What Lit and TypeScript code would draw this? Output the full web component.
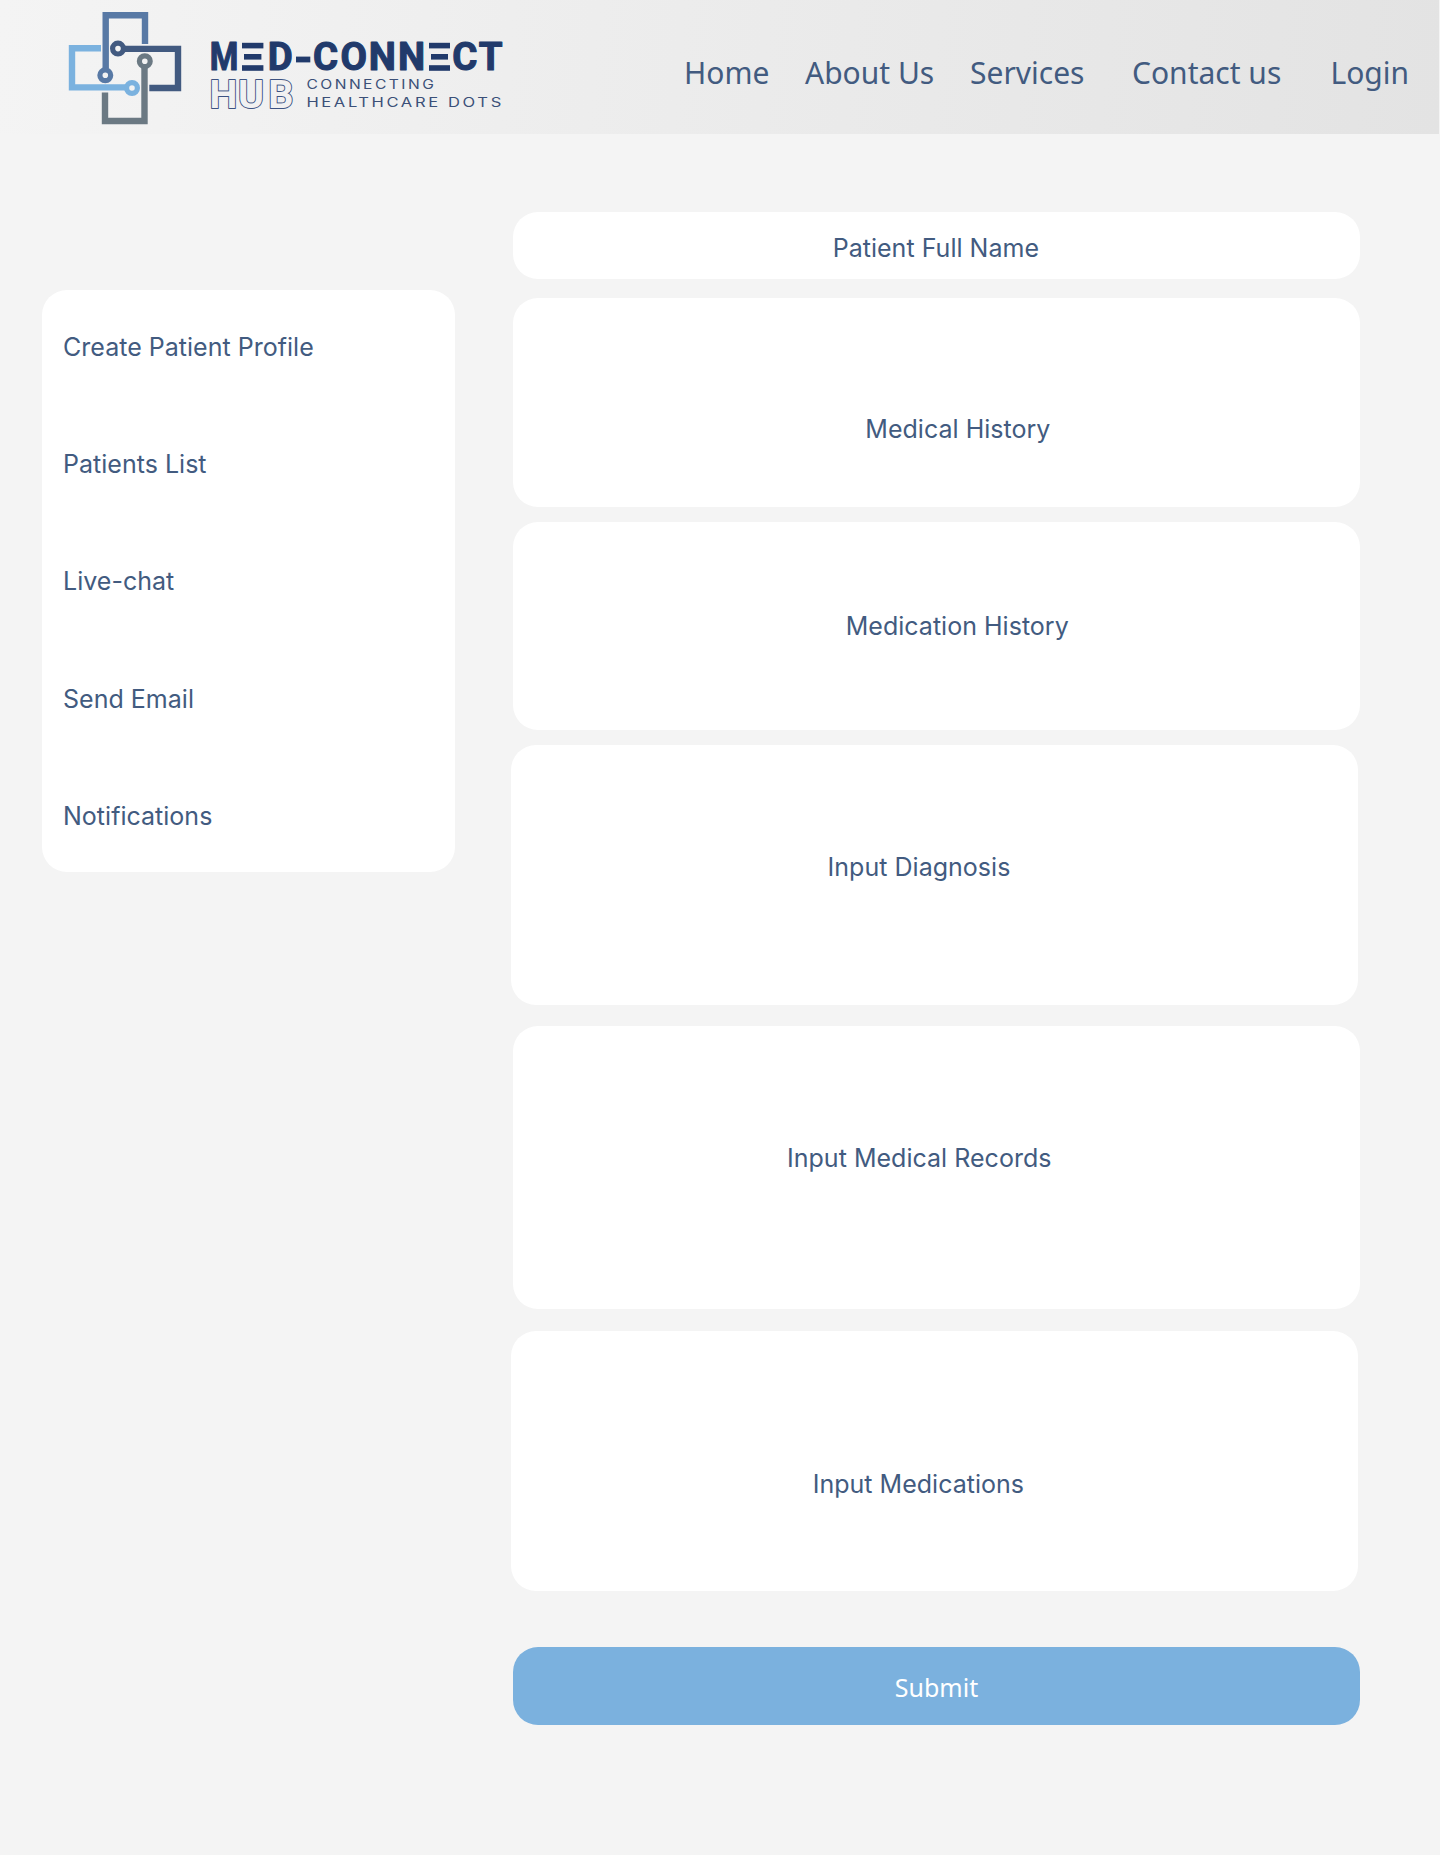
import { LitElement, html, css } from "lit";
import { customElement } from "lit/decorators.js";

@customElement("brand-logo")
class BrandLogo extends LitElement {
  static styles = css`
    :host { display: block; width: 460px; height: 134px; }
    .art { display: block; }
    .word { font: 700 38.4px Roboto, sans-serif; fill: #213a6b; stroke: #213a6b; stroke-width: 1.1; stroke-linejoin: round; }
    .ghost { fill: none; stroke: none; }
    .outline { font: 700 39.5px Roboto, sans-serif; fill: #f1f1f1; stroke: #3d5382; stroke-width: 1.9; paint-order: stroke; stroke-linejoin: round; }
    .tag { font: 400 12.6px Inter, sans-serif; fill: #3b5078; letter-spacing: 2px; }
  `;

  render() {
    return html`
      <svg class="art" width="520" height="134" viewBox="0 0 520 134" role="img" aria-label="Med-Connect Hub">
        <g fill="none" stroke-width="6.4">
          <path d="M145 44V15.3H105.7V68" stroke="#5879a5" />
          <circle cx="105.3" cy="75.3" r="5.4" stroke="#5879a5" stroke-width="5.2" />
          <path d="M101 48.3H72V87.4H125" stroke="#7bb2df" />
          <circle cx="132" cy="88" r="5.4" stroke="#7bb2df" stroke-width="5.2" />
          <path d="M125 48.9H178V88H149.3" stroke="#425a80" />
          <circle cx="118" cy="48.6" r="5.4" stroke="#425a80" stroke-width="5.2" />
          <path d="M105 92.5V121H144.5V68" stroke="#6b7983" />
          <circle cx="144.8" cy="61.2" r="5.4" stroke="#6b7983" stroke-width="5.2" />
        </g>
        <text class="word" y="70.2"><tspan x="209.8" textLength="28.6" lengthAdjust="spacingAndGlyphs">M</tspan><tspan class="ghost" x="240">E</tspan><tspan x="267.8">D</tspan><tspan class="ghost" x="296">-</tspan><tspan x="313 340.6 368.8 398">CONN</tspan><tspan class="ghost" x="428">E</tspan><tspan x="452.3 478.8">CT</tspan></text>
        <g fill="#213a6b">
          <rect x="242" y="42.8" width="21.4" height="5.6" />
          <rect x="244" y="54" width="17.4" height="5.6" />
          <rect x="242" y="65.2" width="21.4" height="5.6" />
          <rect x="296" y="56.6" width="14.3" height="5.8" />
          <rect x="429" y="42.8" width="21" height="5.6" />
          <rect x="431" y="54" width="17" height="5.6" />
          <rect x="429" y="65.2" width="21" height="5.6" />
        </g>
        <text class="outline" x="209.5 238 268.2" y="107.5">HUB</text>
        <text class="tag" x="306.4" y="88.8" textLength="130" lengthAdjust="spacingAndGlyphs">CONNECTING</text>
        <text class="tag" x="306.4" y="107" textLength="197.5" lengthAdjust="spacingAndGlyphs">HEALTHCARE DOTS</text>
      </svg>
    `;
  }
}

@customElement("app-root")
class AppRoot extends LitElement {
  static styles = css`
    :host {
      display: block;
      min-height: 1855px;
      background: #f4f4f4;
      color: #425b80;
      font: 400 25px/30px Inter, sans-serif;
      letter-spacing: 0.02px;
    }
    .header {
      display: flex;
      width: 1439px;
      height: 134px;
      background: linear-gradient(95deg, #f4f4f4 0%, #e3e3e3 100%);
    }
    .nav {
      display: flex;
      margin-left: 224px;
      padding-top: 52px;
      font: 400 30px/42px "Noto Sans", sans-serif;
      letter-spacing: 0;
      white-space: nowrap;
    }
    .link { color: inherit; text-decoration: none; }
    .home { width: 121px; }
    .about { width: 165px; }
    .services { width: 162px; }
    .contact { width: 198.5px; }
    .body { display: flex; align-items: flex-start; padding-left: 42px; }
    .side {
      box-sizing: border-box;
      width: 413px;
      height: 582px;
      margin-top: 156px;
      padding: 42px 0 0 21px;
      border-radius: 25px;
      background: #fff;
      display: flex;
      flex-direction: column;
      gap: 87.2px;
    }
    .form { display: flex; flex-direction: column; margin: 78px 0 0 56px; padding-left: 2px; }
    .card {
      box-sizing: border-box;
      width: 847px;
      border-radius: 25px;
      background: #fff;
      white-space: nowrap;
    }
    .shifted { margin-left: -2px; }
    .name { height: 67px; padding: 21px 0 0 319.7px; margin-bottom: 19px; }
    .history { height: 209px; padding: 116px 0 0 352.3px; margin-bottom: 14.7px; }
    .medication { height: 208.3px; padding: 89px 0 0 332.7px; margin-bottom: 15.4px; }
    .diagnosis { height: 259.6px; padding: 107px 0 0 316.6px; margin-bottom: 20.7px; }
    .records { height: 283.3px; padding: 117px 0 0 274px; margin-bottom: 22px; }
    .prescribe { height: 260px; padding: 138px 0 0 301.7px; margin-bottom: 56px; }
    .submit {
      width: 847px;
      height: 78px;
      padding: 2px 0 0;
      border: 0;
      border-radius: 25px;
      background: #7bb1de;
      color: #fff;
      font: 400 25px/34px "Noto Sans", sans-serif;
    }
  `;

  render() {
    return html`
      <header class="header">
        <brand-logo></brand-logo>
        <nav class="nav">
          <a class="link home">Home</a>
          <a class="link about">About Us</a>
          <a class="link services">Services</a>
          <a class="link contact">Contact us</a>
          <a class="link">Login</a>
        </nav>
      </header>
      <main class="body">
        <aside class="side">
          ${["Create Patient Profile", "Patients List", "Live-chat", "Send Email", "Notifications"].map(
            (label) => html`<a class="link">${label}</a>`
          )}
        </aside>
        <section class="form">
          <div class="card name">Patient Full Name</div>
          <div class="card history">Medical History</div>
          <div class="card medication">Medication History</div>
          <div class="card diagnosis shifted">Input Diagnosis</div>
          <div class="card records">Input Medical Records</div>
          <div class="card prescribe shifted">Input Medications</div>
          <button class="submit">Submit</button>
        </section>
      </main>
    `;
  }
}
